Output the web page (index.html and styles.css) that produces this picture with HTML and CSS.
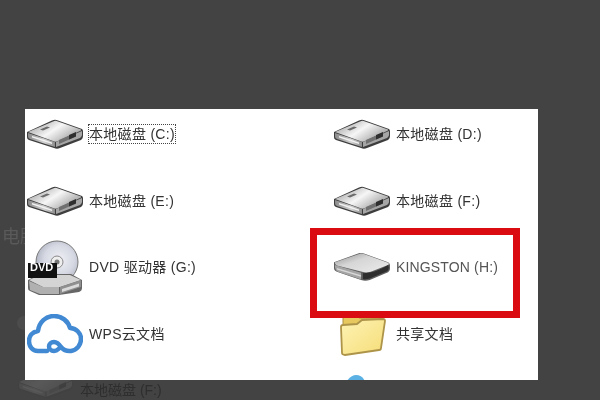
FILE: index.html
```html
<!DOCTYPE html>
<html lang="zh">
<head>
<meta charset="utf-8">
<title>计算机</title>
<link rel="stylesheet" href="styles.css">
</head>
<body>
<svg class="defs" width="0" height="0" aria-hidden="true">
  <defs>
    <linearGradient id="top" x1="0" y1="0" x2="1" y2=".6">
      <stop offset="0" stop-color="#8d8d8d"/><stop offset=".28" stop-color="#c4c4c4"/><stop offset=".55" stop-color="#f6f6f6"/><stop offset=".8" stop-color="#c9c9c9"/><stop offset="1" stop-color="#a2a2a2"/>
    </linearGradient>
    <linearGradient id="side" x1="0" y1="0" x2="1" y2="0">
      <stop offset="0" stop-color="#8a8a8a"/><stop offset=".6" stop-color="#d4d4d4"/><stop offset="1" stop-color="#8c8c8c"/>
    </linearGradient>
    <linearGradient id="usbtop" x1="0" y1="0" x2="1" y2="1">
      <stop offset="0" stop-color="#8f8f8f"/><stop offset=".4" stop-color="#d6d6d6"/><stop offset="1" stop-color="#ececec"/>
    </linearGradient>
    <radialGradient id="cd" cx=".55" cy=".45" r=".6">
      <stop offset="0" stop-color="#f0f0f6"/><stop offset=".6" stop-color="#d5d8e2"/><stop offset="1" stop-color="#a8adbc"/>
    </radialGradient>
    <linearGradient id="fold" x1="0" y1="0" x2="1" y2="1">
      <stop offset="0" stop-color="#fdf3b4"/><stop offset="1" stop-color="#f6dd78"/>
    </linearGradient>
    <symbol id="disk" viewBox="0 0 56 30">
      <path d="M0 13 25 1.500c2-1 4-1 6 0L55 10c1 1 1 2 1 3v4c0 2-1 3-2 4L33 29c-2 1-4 1-6 0L2 21c-2-1-2-2-2-4z" fill="#3d3d3d"/>
      <path d="M1 14 28 23v5L3 20c-2-1-2-2-2-3z" fill="url(#side)"/>
      <path d="M5 17l20 6.500v1.500L5 18.500z" fill="#f2f2f2"/>
      <path d="M29 23 55 12v4c0 1-1 2-2 3L29 28z" fill="#a6a6a6"/>
      <path d="M1 13 26 2.500c2-1 3-1 5 0l23 8c0 1 0 1-1 1.500L31 22c-2 1-3 1-5 0z" fill="url(#top)"/>
      <path d="M13 10.500l7-3 3 1-7 3z" fill="#6b6b6b"/>
      <path d="M32 25l17-7.500v-4l-17 7.500z" fill="#707070"/>
      <path d="M42 20.500l7-3v-4.500l-7 3z" fill="#2f2f2f"/>
    </symbol>
    <symbol id="usb" viewBox="0 0 58 30">
      <path d="M0 10 25 1c2-.6 4-.6 6 0l25 9c1.500 1 2 2 2 3.500v3c0 2-1 3-2 4L37 28.500c-3 1-6 1-9 0L3 20c-2-1-3-2-3-4z" fill="#5f5f5f"/>
      <path d="M1 10 26 1.500c2-.6 3-.6 5 0l25 9c1 .5 1 1.500 0 2.500L38 20c-3 1-6 1-9 0L3 13.500c-1.500-1-2.500-2.500-2-3.500z" fill="url(#usbtop)"/>
      <path d="M1 13l27 8v7L4 20c-2-1-3.500-4-3-7z" fill="#a4a4a4"/>
      <path d="M3 16l25 7.500v1.500L3 17.500z" fill="#d8d8d8"/>
      <path d="M30 21.500c9 0 18-3.500 26-8.500 1.500 3 .5 5.500-1 6.500L37 27c-2 .7-4.500 1-7 .8z" fill="#2e2e2e"/>
    </symbol>
  </defs>
</svg>

<div class="ghost-label">电脑</div>
<div class="ghost-row">
  <svg class="ghost-disk" viewBox="0 0 56 30"><use href="#disk"/></svg>
  <span>本地磁盘 (F:)</span>
</div>
<div class="ghost-dot"></div>

<main class="panel">
  <div class="grid">
    <div class="item">
      <svg class="icon" viewBox="0 0 56 30"><use href="#disk"/></svg>
      <span class="name focus">本地磁盘 (C:)</span>
    </div>
    <div class="item">
      <svg class="icon" viewBox="0 0 56 30"><use href="#disk"/></svg>
      <span class="name">本地磁盘 (D:)</span>
    </div>
    <div class="item">
      <svg class="icon" viewBox="0 0 56 30"><use href="#disk"/></svg>
      <span class="name">本地磁盘 (E:)</span>
    </div>
    <div class="item">
      <svg class="icon" viewBox="0 0 56 30"><use href="#disk"/></svg>
      <span class="name">本地磁盘 (F:)</span>
    </div>
    <div class="item">
      <svg class="icon icon-tall" viewBox="0 0 56 56">
        <circle cx="30" cy="23" r="21" fill="url(#cd)" stroke="#777" stroke-width="1"/>
        <circle cx="30" cy="23" r="6" fill="#eee" stroke="#888"/>
        <circle cx="30" cy="23" r="2.500" fill="#777"/>
        <path d="M1 41 12 35h32l11 6v8c0 2-1 3-3 4l-20 3H12L3 52c-2-1-2-2-2-4z" fill="#666"/>
        <path d="M2 41 13 36h30l11 5-21 7H16z" fill="#d4d4d4"/>
        <path d="M2 42l14 6h16v7H13L3 51z" fill="#b0b0b0"/>
        <path d="M33 48l21-7v7l-21 7z" fill="#8f8f8f"/>
        <path d="M35 50l17-5.500v3L35 53z" fill="#dadada"/>
        <rect x="1" y="24" width="29" height="15" fill="#111"/>
      </svg>
      <span class="dvd">DVD</span>
      <span class="name">DVD 驱动器 (G:)</span>
    </div>
    <div class="item item-hl">
      <svg class="icon" viewBox="0 0 58 30"><use href="#usb"/></svg>
      <span class="name kingston">KINGSTON (H:)</span>
    </div>
    <div class="item">
      <svg class="icon icon-cloud" viewBox="0 0 56 40">
        <path d="M20 37H11C5 37 2 32 2 27c0-5 3-9 9-10C12 8 19 2 27 2c8 0 14 5 16 12 6 0 11 5 11 11 0 6-4 11-10 12-4 .5-7-.5-10-4-2-3-4-5-7-5-3 0-5 2-5 4.500 0 2.500 2 4.500 5 4.500 2 0 3.500-1 4.500-2" fill="none" stroke="#4189d2" stroke-width="4.500" stroke-linecap="round" stroke-linejoin="round"/>
      </svg>
      <span class="name">WPS云文档</span>
    </div>
    <div class="item">
      <svg class="icon icon-folder" viewBox="0 0 46 44">
        <path d="M3 6c0-2 1-3 3-3h10l3 3h20c2 0 3 1 3 3v20H3z" fill="#e6c85f" stroke="#a98f44"/>
        <path d="M1 15c0-1 1-2 2-2l14-1 5-4 21-1c1 0 2 1 2 2l-4 27c0 1-1 2-2 2L5 43c-2 0-3-1-3-2z" fill="url(#fold)" stroke="#ad9449" stroke-width="1.800"/>
      </svg>
      <span class="name">共享文档</span>
    </div>
  </div>
  <svg class="peek" viewBox="0 0 20 6"><path d="M0 6C3 2 7 0 10 0c4 0 8 2 10 6z" fill="#5cb1e4"/></svg>
</main>
<div class="highlight"></div>
</body>
</html>
```
FILE: styles.css
```css
* { box-sizing: border-box; }
html, body { margin: 0; height: 100%; }
body {
  width: 600px;
  height: 400px;
  overflow: hidden;
  position: relative;
  background: #434343;
  font-family: "Liberation Sans", "Noto Sans CJK SC", sans-serif;
}
.defs { position: absolute; }
.ghost-label {
  position: absolute;
  left: 2px;
  top: 226px;
  font-size: 18px;
  line-height: 22px;
  color: #5a5a5a;
  filter: blur(.5px);
}
.ghost-row {
  position: absolute;
  left: 18px;
  top: 381px;
  display: flex;
  align-items: flex-start;
  gap: 7px;
  color: #2e2e2e;
  font-size: 14px;
  line-height: 19px;
  filter: blur(.6px);
}
.ghost-disk { width: 55px; height: 30px; margin-top: -12px; opacity: .12; }
.ghost-dot {
  position: absolute;
  left: 17px;
  top: 316px;
  width: 14px;
  height: 14px;
  border-radius: 50%;
  background: #4c4c4c;
}
.panel {
  position: absolute;
  left: 25px;
  top: 109px;
  width: 513px;
  height: 271px;
  background: #fff;
  overflow: hidden;
}
.grid {
  display: grid;
  grid-template-columns: 307px 206px;
  grid-auto-rows: 50px;
  row-gap: 16.500px;
}
.item {
  position: relative;
  display: flex;
  align-items: center;
  padding-left: 2px;
  filter: blur(.45px);
}
.icon { width: 56px; height: 30px; flex: none; }
.icon-tall { height: 56px; }
.icon-cloud { height: 40px; }
.icon-folder { width: 46px; height: 44px; margin-left: 6px; margin-right: 4px; }
.name {
  margin-left: 6px;
  font-size: 14px;
  line-height: 18px;
  color: #333;
  letter-spacing: .3px;
  white-space: nowrap;
}
.kingston { color: #555; letter-spacing: .15px; }
.focus { outline: 1px dotted #444; outline-offset: 0; }
.dvd {
  position: absolute;
  left: 5px;
  top: 19px;
  font-size: 11px;
  line-height: 13px;
  font-weight: bold;
  color: #fff;
}
.peek { position: absolute; left: 320px; bottom: 0; width: 22px; height: 5px; }
.highlight {
  position: absolute;
  left: 310px;
  top: 228px;
  width: 210px;
  height: 90px;
  border: 7px solid #da0c12;
}
```
